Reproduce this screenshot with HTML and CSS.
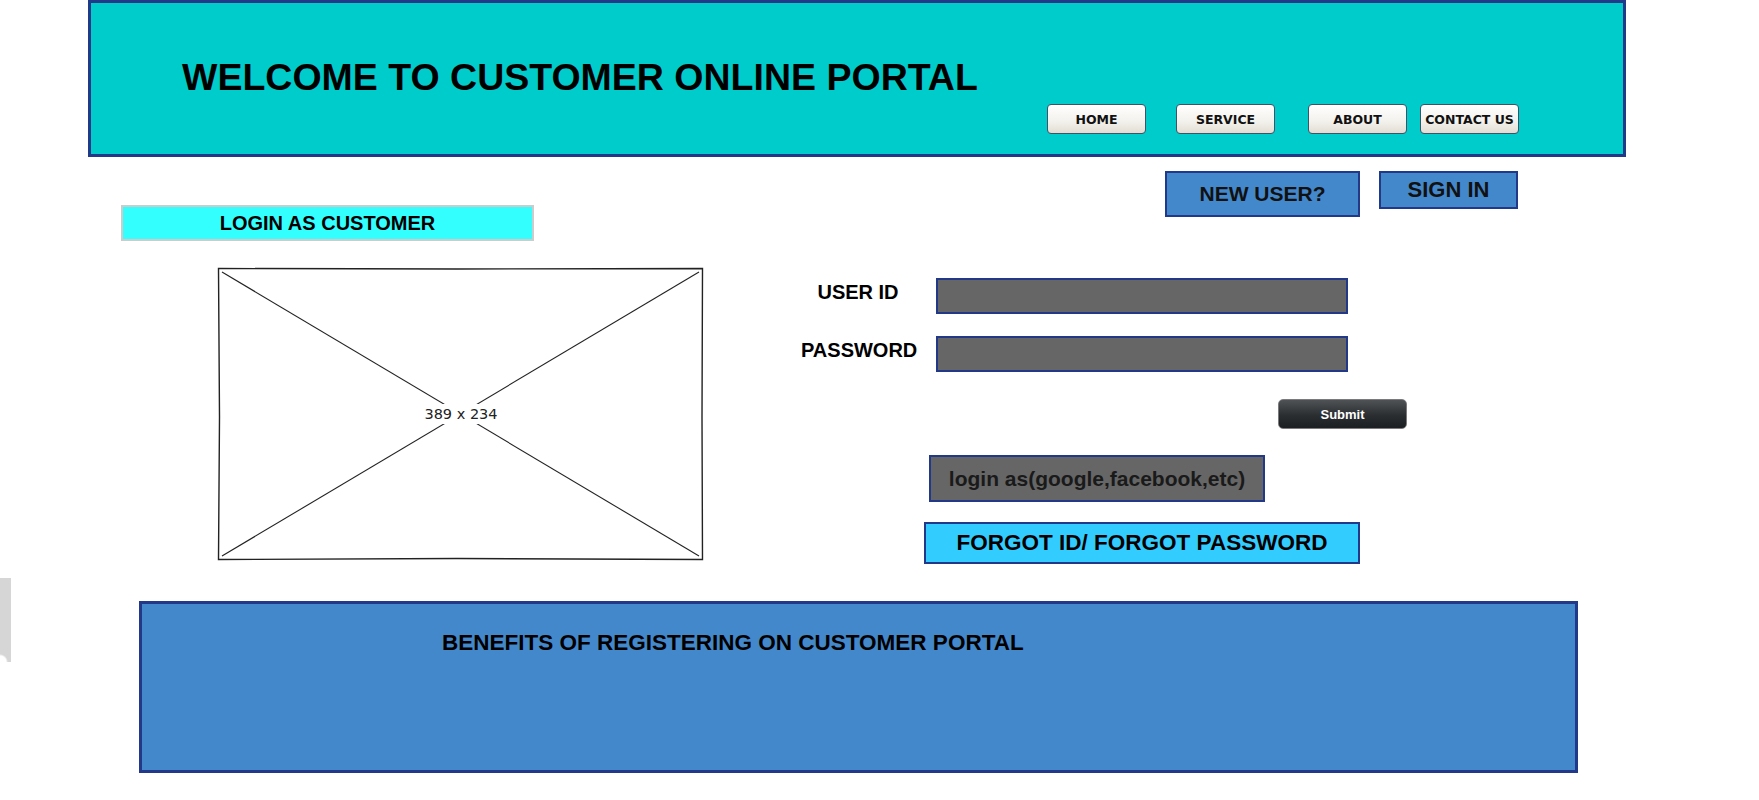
FILE: index.html
```html
<!DOCTYPE html>
<html lang="en">
<head>
    <meta charset="UTF-8">
    <meta name="viewport" content="width=device-width, initial-scale=1.0">
    <title>Customer Online Portal</title>
    <link rel="stylesheet" href="styles.css">
</head>
<body>
    <div class="page">
        <header class="top">
            <h1 class="title">WELCOME TO CUSTOMER ONLINE PORTAL</h1>
            <nav class="menu">
                <a class="menu-btn" href="#">HOME</a>
                <a class="menu-btn menu-service" href="#">SERVICE</a>
                <a class="menu-btn menu-about" href="#">ABOUT</a>
                <a class="menu-btn menu-contact" href="#">CONTACT US</a>
            </nav>
        </header>
        <div class="content">
            <div class="left-column">
                <div class="login-title">LOGIN AS CUSTOMER</div>
                <div class="placeholder">
                    <svg width="487" height="294" viewBox="0 0 487 294">
                        <path d="M1.5 1.5 L240 2 L485.5 1.5 L485 150 L485.5 292.5 L240 291.5 L1.5 292.5 L2.5 150 Z" fill="none" stroke="#222" stroke-width="1.4"/>
                        <line x1="5" y1="5" x2="482" y2="289" stroke="#222" stroke-width="1.1"/>
                        <line x1="482" y1="5" x2="5" y2="289" stroke="#222" stroke-width="1.1"/>
                        <rect x="205" y="137" width="78" height="20" fill="#fff"/>
                        <text x="244" y="152" text-anchor="middle" class="placeholder-text">389 x 234</text>
                    </svg>
                </div>
            </div>
            <div class="right-column">
                <div class="account-links">
                    <a class="new-user" href="#">NEW USER?</a>
                    <a class="sign-in" href="#">SIGN IN</a>
                </div>
                <form class="login-form" onsubmit="return false">
                    <div class="field">
                        <label for="user-id">USER ID</label>
                        <input type="text" id="user-id">
                    </div>
                    <div class="field">
                        <label for="password">PASSWORD</label>
                        <input type="password" id="password">
                    </div>
                    <button class="submit" type="submit">Submit</button>
                    <button class="social" type="button">login as(google,facebook,etc)</button>
                    <a class="forgot" href="#">FORGOT ID/ FORGOT PASSWORD</a>
                </form>
            </div>
        </div>
        <div class="benefits">
            <h3>BENEFITS OF REGISTERING ON CUSTOMER PORTAL</h3>
        </div>
        <div class="edge-shape"></div>
    </div>
</body>
</html>
```
FILE: styles.css
```css
body {
    margin: 0;
    font-family: "Liberation Sans", Arial, sans-serif;
    background: #fff;
    color: #000;
}
.page {
    position: relative;
    width: 1759px;
    height: 800px;
    overflow: hidden;
}
a {
    color: inherit;
    text-decoration: none;
}

/* header */
.top {
    box-sizing: border-box;
    margin-left: 88px;
    width: 1538px;
    height: 157px;
    background: #00cccc;
    border: 3px solid #22398a;
}
.title {
    margin: 0;
    padding: 56px 0 0 91px;
    font-size: 37.5px;
    line-height: 37px;
    font-weight: bold;
}
.menu {
    display: flex;
    margin: 8px 0 0 956px;
}
.menu-btn {
    box-sizing: border-box;
    width: 99px;
    height: 30px;
    padding-top: 1px;
    display: flex;
    align-items: center;
    justify-content: center;
    background: linear-gradient(#ffffff, #f3f1ec 60%, #e2ddd3);
    border: 1px solid #3f5266;
    border-radius: 4px;
    font-family: "DejaVu Sans", Tahoma, sans-serif;
    font-size: 12.5px;
    font-weight: bold;
    color: #111;
}
.menu-service {
    margin-left: 30px;
}
.menu-about {
    margin-left: 33px;
}
.menu-contact {
    margin-left: 13px;
}

/* main area */
.content {
    display: flex;
    align-items: flex-start;
}
.left-column {
    margin-left: 121px;
    width: 583px;
    padding-top: 48px;
}
.login-title {
    box-sizing: border-box;
    width: 413px;
    height: 36px;
    display: flex;
    align-items: center;
    justify-content: center;
    background: #33ffff;
    border: 2px solid #cccccc;
    font-size: 20px;
    font-weight: bold;
}
.placeholder {
    margin: 26px 0 0 96px;
    width: 487px;
    height: 294px;
}
.placeholder svg {
    display: block;
}
.placeholder-text {
    font-family: "DejaVu Sans", sans-serif;
    font-size: 14.5px;
    fill: #222;
}

.right-column {
    margin-left: 97px;
    width: 717px;
    padding-top: 14px;
}
.account-links {
    display: flex;
    align-items: flex-start;
    padding-left: 364px;
}
.new-user, .sign-in {
    box-sizing: border-box;
    display: flex;
    align-items: center;
    justify-content: center;
    background: #4488cc;
    border: 2px solid #22398a;
    font-weight: bold;
    color: #111;
}
.new-user {
    width: 195px;
    height: 46px;
    font-size: 21px;
}
.sign-in {
    margin-left: 19px;
    width: 139px;
    height: 38px;
    font-size: 22px;
}

.login-form {
    margin-top: 61px;
}
.field {
    display: flex;
    align-items: flex-start;
}
.field + .field {
    margin-top: 22px;
}
.field label {
    width: 114px;
    padding-top: 3px;
    text-align: center;
    font-size: 20px;
    line-height: 22px;
    font-weight: bold;
}
.field input {
    box-sizing: border-box;
    margin-left: 21px;
    width: 412px;
    height: 36px;
    background: #666666;
    border: 2px solid #22398a;
    outline: none;
}
.submit {
    display: block;
    box-sizing: border-box;
    margin: 27px 0 0 477px;
    width: 129px;
    height: 30px;
    background: linear-gradient(#505356, #2b2e30 55%, #1c1f21);
    border: 1px solid #7a7a7a;
    border-radius: 5px;
    color: #fff;
    font-family: "Liberation Sans", Arial, sans-serif;
    font-size: 13px;
    font-weight: bold;
    cursor: pointer;
}
.social {
    display: block;
    box-sizing: border-box;
    margin: 26px 0 0 128px;
    width: 336px;
    height: 47px;
    background: #666666;
    border: 2px solid #22398a;
    color: #1a1a1a;
    font-family: "Liberation Sans", Arial, sans-serif;
    font-size: 21px;
    font-weight: bold;
    cursor: pointer;
}
.forgot {
    box-sizing: border-box;
    display: flex;
    align-items: center;
    justify-content: center;
    margin: 20px 0 0 123px;
    width: 436px;
    height: 42px;
    background: #33ccff;
    border: 2px solid #22398a;
    font-size: 22.5px;
    font-weight: bold;
    color: #000;
}

/* bottom box */
.benefits {
    box-sizing: border-box;
    margin: 37px 0 0 139px;
    width: 1439px;
    height: 172px;
    padding: 26px 0 0 300px;
    background: #4488cc;
    border: 3px solid #22398a;
}
.benefits h3 {
    margin: 0;
    font-size: 22.5px;
    line-height: 26px;
    font-weight: bold;
}

/* stray shape cut off at the left edge */
.edge-shape {
    position: absolute;
    left: 0;
    top: 578px;
    width: 11px;
    height: 84px;
    background: radial-gradient(circle at 0 100%, #fff 0 6px, #d6d6d6 8px);
}
```
